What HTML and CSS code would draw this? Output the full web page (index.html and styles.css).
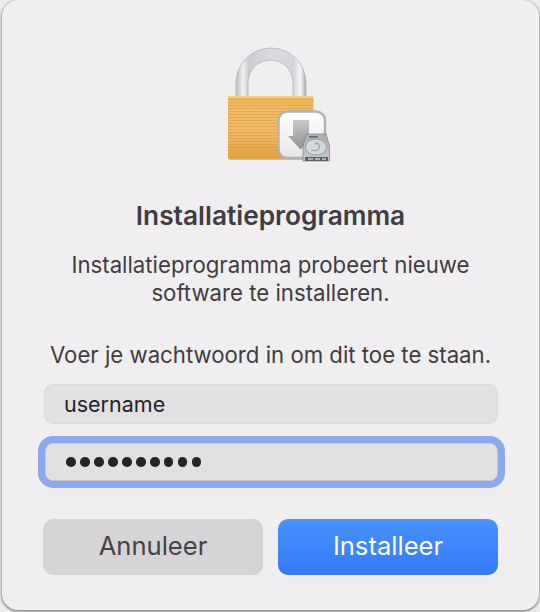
FILE: index.html
```html
<!DOCTYPE html>
<html lang="nl">
<head>
  <meta charset="UTF-8" />
  <title>Installatieprogramma</title>
  <link rel="stylesheet" href="styles.css">
</head>
<body>
  <div class="dialog">
    <svg class="lock-icon" width="120" height="130" viewBox="211 40 120 130">
      <defs>
        <linearGradient id="shackle" x1="0" y1="0" x2="1" y2="0">
          <stop offset="0" stop-color="#bcbcc1"/>
          <stop offset="0.1" stop-color="#f0f0f2"/>
          <stop offset="0.18" stop-color="#cdcdd1"/>
          <stop offset="0.5" stop-color="#dcdce0"/>
          <stop offset="0.82" stop-color="#d6d6da"/>
          <stop offset="0.92" stop-color="#f4f4f6"/>
          <stop offset="1" stop-color="#acacb1"/>
        </linearGradient>
        <linearGradient id="brass" x1="0" y1="0" x2="0" y2="1">
          <stop offset="0" stop-color="#efb85c"/>
          <stop offset="0.5" stop-color="#f0bc6c"/>
          <stop offset="1" stop-color="#e4a444"/>
        </linearGradient>
        <pattern id="grain" width="4" height="3" patternUnits="userSpaceOnUse">
          <rect width="4" height="1" fill="#d48e30" opacity="0.4"/>
        </pattern>
        <linearGradient id="tile" x1="0" y1="0" x2="0" y2="1">
          <stop offset="0" stop-color="#ffffff"/>
          <stop offset="1" stop-color="#e6e6e8"/>
        </linearGradient>
        <linearGradient id="arrow" x1="0" y1="0" x2="0" y2="1">
          <stop offset="0" stop-color="#c8cacb"/>
          <stop offset="1" stop-color="#8d9092"/>
        </linearGradient>
        <linearGradient id="disk" x1="0" y1="0" x2="0" y2="1">
          <stop offset="0" stop-color="#a8aeb1"/>
          <stop offset="1" stop-color="#c6cbcd"/>
        </linearGradient>
      </defs>
      <path d="M236 97V83A35 35 0 0 1 306 83V97H293V82.5A22.5 22.5 0 0 0 248 82.5V97Z" fill="url(#shackle)" stroke="#adaeb2" stroke-width="0.7"/>
      <rect x="228" y="96" width="85.5" height="63.5" rx="2" fill="url(#brass)"/>
      <rect x="228" y="96" width="85.5" height="63.5" rx="2" fill="url(#grain)"/>
      <rect x="228" y="96" width="85.5" height="1.6" fill="#f8d290"/>
      <rect x="278.5" y="111.5" width="46.5" height="46.5" rx="9" fill="url(#tile)" stroke="#b0b2b5" stroke-width="2.4"/>
      <path d="M293 120H309V136H314L300.500 149.500L288 136H293Z" fill="url(#arrow)"/>
      <path d="M306 134H326L329.500 146V161H303V146Z" fill="url(#disk)" stroke="#7b7f81" stroke-width="0.7"/>
      <rect x="309" y="136" width="9" height="1.6" fill="#666a6c"/>
      <ellipse cx="316" cy="147" rx="10.500" ry="8" fill="#d4d8da" stroke="#898d8f" stroke-width="0.7"/>
      <path d="M311 150C316 152 321 149 319 145C318 143 316 143 315 144" fill="none" stroke="#989c9e" stroke-width="1.1"/>
      <rect x="305" y="157" width="23" height="4" fill="#5c6062"/>
      <rect x="308" y="158" width="5" height="2" fill="#aeb2b4"/>
      <rect x="315" y="158" width="5" height="2" fill="#aeb2b4"/>
      <rect x="322" y="158" width="4" height="2" fill="#aeb2b4"/>
    </svg>

    <h2 class="title">Installatieprogramma</h2>
    <p class="message">Installatieprogramma probeert nieuwe<br>software te installeren.</p>
    <p class="prompt">Voer je wachtwoord in om dit toe te staan.</p>

    <div class="field">username</div>
    <div class="field field-focus">
      <span class="dots">
        <i></i><i></i><i></i><i></i><i></i><i></i><i></i><i></i><i></i><i></i>
      </span>
    </div>

    <div class="buttons">
      <button class="btn btn-cancel">Annuleer</button>
      <button class="btn btn-install">Installeer</button>
    </div>
  </div>
</body>
</html>
```

FILE: styles.css
```css
html, body {
  height: 100%;
}

body {
  margin: 0;
  padding: 0 1px 2px 2px;
  box-sizing: border-box;
  background: #ececec;
  font-family: Inter, "Liberation Sans", sans-serif;
  overflow: hidden;
}

.dialog {
  height: 610px;
  box-sizing: border-box;
  padding: 40px 41px 0;
  background: #f0eef1;
  border-radius: 16px;
  box-shadow: 0 1px 2px 1px rgba(0, 0, 0, 0.35);
  text-align: center;
  color: #3f3d40;
}

.lock-icon {
  display: block;
  margin: 0 auto;
}

.title {
  margin: 32px 0 0;
  font-size: 26.3px;
  line-height: 28px;
  font-weight: 600;
}

.message {
  margin: 21px 0 0;
  font-size: 22.2px;
  line-height: 28px;
  white-space: nowrap;
}

.prompt {
  margin: 34px 0 0;
  font-size: 22.2px;
  line-height: 28px;
  white-space: nowrap;
}

.field {
  height: 40px;
  box-sizing: border-box;
  margin: 15px 0 0 1px;
  padding-left: 19px;
  background: #e2e0e3;
  border: 1px solid #dbd9dc;
  border-radius: 9px;
  font-size: 21.5px;
  line-height: 38px;
  color: #242325;
  text-align: left;
}

.field-focus {
  height: 38px;
  margin: 19px 0 0 2px;
  padding-left: 20px;
  display: flex;
  align-items: center;
  border-color: #c9c8d0;
  border-radius: 8px;
  box-shadow: 0 0 0 7px #8ca9ee;
}

.dots {
  display: flex;
  gap: 4.4px;
}

.dots i {
  width: 9.6px;
  height: 9.6px;
  border-radius: 50%;
  background: #242325;
}

.buttons {
  display: flex;
  justify-content: space-between;
  margin-top: 38px;
}

.btn {
  width: 220px;
  height: 56px;
  padding: 0 0 4px;
  border: none;
  border-radius: 10px;
  font-family: inherit;
  font-size: 25.6px;
}

.btn-cancel {
  background: #d6d4d7;
  color: #454345;
}

.btn-install {
  background: linear-gradient(to bottom, #4a92fb, #3279f8);
  color: #fff;
}
```
